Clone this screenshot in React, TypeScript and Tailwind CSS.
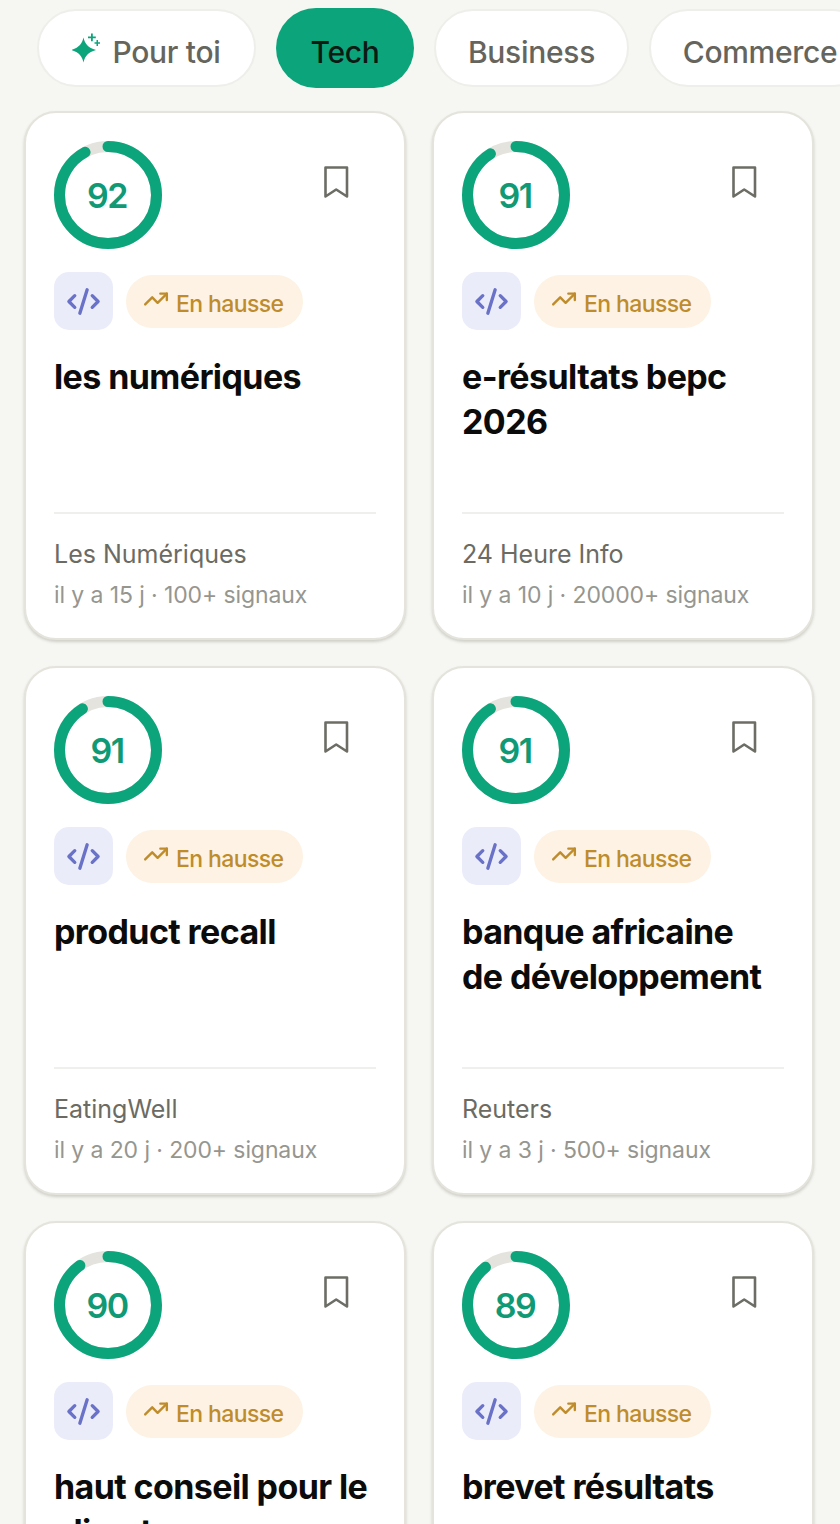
import { CodeXml, TrendingUp } from "lucide-react";

const cards = [
  { score: 92, title: "les numériques", source: "Les Numériques", meta: "il y a 15 j · 100+ signaux" },
  { score: 91, title: "e-résultats bepc 2026", source: "24 Heure Info", meta: "il y a 10 j · 20000+ signaux" },
  { score: 91, title: "product recall", source: "EatingWell", meta: "il y a 20 j · 200+ signaux" },
  { score: 91, title: "banque africaine de développement", source: "Reuters", meta: "il y a 3 j · 500+ signaux" },
  { score: 90, title: "haut conseil pour le climat", source: "Le Monde", meta: "il y a 2 j · 100+ signaux" },
  { score: 89, title: "brevet résultats", source: "France Info", meta: "il y a 1 j · 1000+ signaux" },
];

function ScoreRing({ score }: { score: number }) {
  const r = 48.5;
  const c = 2 * Math.PI * r;
  return (
    <div className="relative h-[108px] w-[108px]">
      <svg width="108" height="108" viewBox="0 0 108 108" className="-rotate-90">
        <circle cx="54" cy="54" r={r} fill="none" stroke="#e4e3dd" strokeWidth="11" />
        <circle
          cx="54"
          cy="54"
          r={r}
          fill="none"
          stroke="#0ca47b"
          strokeWidth="11"
          strokeLinecap="round"
          strokeDasharray={`${(score / 100) * c} ${c}`}
        />
      </svg>
      <div className="absolute inset-0 flex items-center justify-center pt-[1px] pr-[2px] text-[34px] font-semibold tracking-[-1.5px] text-[#0f9a75]">
        {score}
      </div>
    </div>
  );
}

function Card({ score, title, source, meta }: (typeof cards)[number]) {
  return (
    <article className="flex h-[529px] flex-col rounded-[32px] border-2 border-[#e4e3dc] bg-white px-[28px] pt-[28px] pb-[27px] shadow-[0_2px_3px_rgba(120,120,105,0.3)]">
      <div className="flex items-start justify-between">
        <ScoreRing score={score} />
        <svg width="26" height="34" viewBox="0 0 26 34" fill="none" className="mt-[24px] mr-[27px]">
          <path d="M2.5 2.5H24V31.5L13.2 24.5L2.5 31.5Z" stroke="#6d6d66" strokeWidth="2.6" strokeLinejoin="round" />
        </svg>
      </div>
      <div className="mt-[23px] flex items-center gap-[13px]">
        <div className="flex h-[58px] w-[59px] items-center justify-center rounded-[15px] bg-[#ebecfa]">
          <CodeXml size={35} strokeWidth={2.3} color="#6a72c8" />
        </div>
        <div className="flex h-[53px] w-[177px] items-center gap-[7px] rounded-full bg-[#fdf2e3] pl-[17px] text-[23px] font-medium tracking-[-0.6px] text-[#bf8c2c]">
          <TrendingUp size={26} strokeWidth={2.2} className="-mt-[4px]" />
          <span className="pt-[6px]">En hausse</span>
        </div>
      </div>
      <h2 className="mt-[24px] pr-[6px] text-[34px] leading-[45px] font-bold tracking-[-0.6px] text-[#0b0b0b]">{title}</h2>
      <div className="mt-auto border-t-2 border-[#efefeb] pt-[24px]">
        <p className="text-[25px] leading-[32px] text-[#6b6b63]">{source}</p>
        <p className="mt-[9px] text-[23px] leading-[32px] tracking-[-0.1px] text-[#96968f]">{meta}</p>
      </div>
    </article>
  );
}

export default function App() {
  return (
    <div className="h-[1524px] w-[840px] overflow-hidden bg-[#f6f6f2] font-['Inter',sans-serif]">
      <div className="flex items-center gap-[20px] pt-[8px] pl-[37px] text-[30px] font-medium tracking-[-0.3px] whitespace-nowrap text-[#65655e]">
        <div className="flex h-[78px] w-[219px] shrink-0 items-center justify-center gap-[12px] rounded-full border-2 border-[#eeeeea] bg-white">
          <svg width="28" height="30" viewBox="0 0 28 30" fill="#0ca47b">
            <path d="M11.5 4.5C12.8 10.5 16 14.8 24 17C16 19.2 12.8 23.5 11.5 29.5C10.2 23.5 7 19.2 -1 17C7 14.8 10.2 10.5 11.5 4.5Z" />
            <path d="M19 0.5h1.8v3h3v1.8h-3v3H19v-3h-3V3.5h3Z" />
            <path d="M24.5 7h1.5v2.3h2v1.5h-2v2.3h-1.5v-2.3h-2V9.3h2Z" />
          </svg>
          <span className="pt-[8px]">Pour toi</span>
        </div>
        <div className="flex h-[80px] w-[138px] shrink-0 items-center justify-center rounded-full bg-[#0ca47b] text-[#0c1a14]">
          <span className="pt-[8px]">Tech</span>
        </div>
        <div className="flex h-[78px] w-[195px] shrink-0 items-center justify-center rounded-full border-2 border-[#eeeeea] bg-white">
          <span className="pt-[8px]">Business</span>
        </div>
        <div className="flex h-[78px] w-[222px] shrink-0 items-center justify-center rounded-full border-2 border-[#eeeeea] bg-white">
          <span className="pt-[8px]">Commerce</span>
        </div>
      </div>
      <div className="mt-[23px] grid grid-cols-[382px_382px] gap-[26px] pl-[24px]">
        {cards.map((card) => (
          <Card key={card.title} {...card} />
        ))}
      </div>
    </div>
  );
}
